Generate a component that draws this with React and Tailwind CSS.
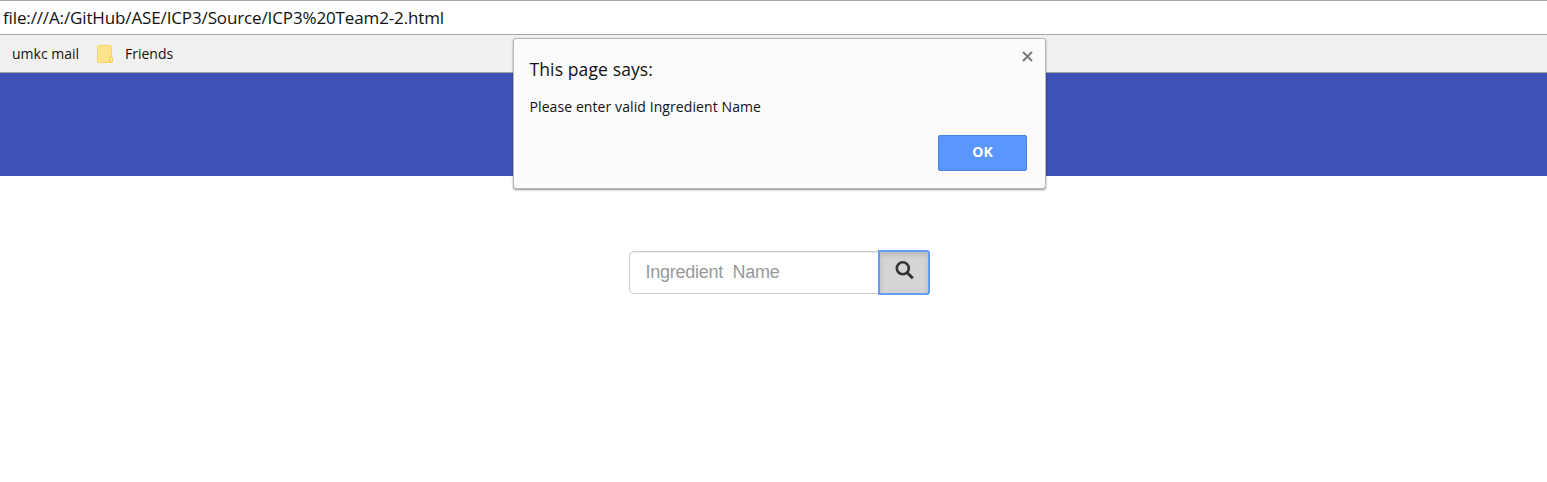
function AddressBar() {
  return (
    <div className="flex h-[35px] items-center border-t border-b border-[#a6a6a6] pl-[3px] text-[17px] tracking-[-0.13px] whitespace-nowrap text-[#111]">
      file:///A:/GitHub/ASE/ICP3/Source/ICP3%20Team2-2.html
    </div>
  );
}

function FolderIcon() {
  return (
    <svg width="16" height="18" viewBox="0 0 16 18" aria-hidden="true">
      <rect x="0.5" y="0.5" width="14" height="17" rx="1" fill="#ffe48c" stroke="#f6d566" />
      <path d="M12.5 17.5V13Q12.5 11.5 14 11.5T15.5 13V16Q15.5 17.5 14 17.5Z" fill="#ffe48c" stroke="#f0cc5a" />
    </svg>
  );
}

function BookmarksBar() {
  return (
    <div className="flex h-[38px] items-center border-b border-[#a6a6a6] bg-[#f1f1f1] pl-3 text-[14px] whitespace-nowrap text-[#111]">
      <span className="w-[85px]">umkc mail</span>
      <FolderIcon />
      <span className="ml-3">Friends</span>
    </div>
  );
}

function AlertDialog() {
  return (
    <div role="alertdialog" className="absolute top-[38px] left-[513px] flex h-[151px] w-[533px] flex-col rounded-[3px] border border-[#b8b8b8] bg-[#fbfbfb] pl-[15.5px] shadow-[0_1px_2px_rgba(0,0,0,0.45)]">
      <div className="flex items-start justify-between pr-3">
        <h1 className="mt-[18px] text-[17.5px] leading-6 tracking-[0.12px] text-[#111]">This page says:</h1>
        <button aria-label="Close" className="mt-3">
          <svg width="11" height="11" viewBox="0 0 11 11" stroke="#7b7b7b" strokeWidth="2">
            <path d="M1 1L10 10M10 1L1 10" />
          </svg>
        </button>
      </div>
      <p className="mt-4 text-[14px] leading-5 tracking-[0.09px] text-[#111]">Please enter valid Ingredient Name</p>
      <button className="mt-[18px] mr-[18px] h-9 w-[89px] self-end rounded-[2px] border border-[#4b82df] bg-[#5b96ff] pb-1 text-[14px] font-bold text-white">
        OK
      </button>
    </div>
  );
}

function SearchBox() {
  return (
    <form className="mt-[74px] ml-[629px] flex h-[45px] w-[301px] items-center font-['Liberation_Sans',sans-serif]">
      <input
        type="text"
        placeholder="Ingredient  Name"
        className="h-[43px] min-w-0 flex-1 rounded-l-[5px] border border-r-0 border-[#ccc] pl-[15.5px] text-[18px] tracking-[-0.25px] shadow-[inset_0_1px_1px_rgba(0,0,0,0.075)] placeholder:text-[#999]"
      />
      <button type="button" aria-label="Search" className="flex h-[45px] w-[52px] justify-center rounded-r-[3px] border-2 border-[#659cf2] bg-[#d4d4d4] pt-[9px] shadow-[inset_0_3px_5px_rgba(0,0,0,0.125)]">
        <svg width="19" height="19" viewBox="0 0 19 19" fill="none" stroke="#333">
          <circle cx="7.8" cy="7.3" r="6" strokeWidth="2.6" />
          <path d="M12.2 11.7L17.8 17.3" strokeWidth="3" />
        </svg>
      </button>
    </form>
  );
}

export default function App() {
  return (
    <div className="relative h-[482px] w-[1547px] overflow-hidden bg-white font-['Open_Sans',sans-serif]">
      <AddressBar />
      <BookmarksBar />
      <header className="h-[103px] bg-[#3f51b5]" />
      <SearchBox />
      <AlertDialog />
    </div>
  );
}
